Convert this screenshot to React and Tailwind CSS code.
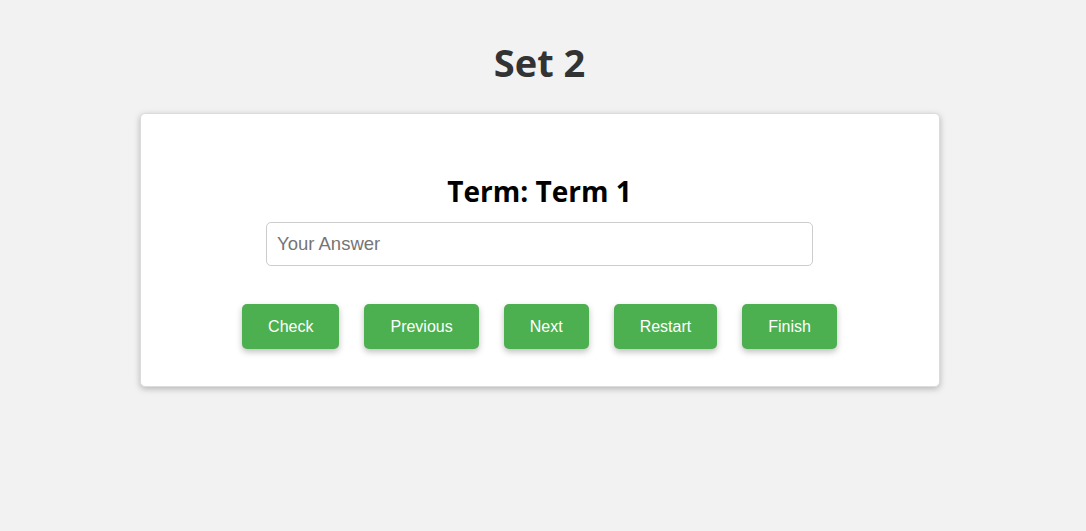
import { useState } from 'react'

const buttons = ['Check', 'Previous', 'Next', 'Restart', 'Finish']

function App() {
  const [answer, setAnswer] = useState('')

  return (
    <div className="min-h-screen bg-[#f2f2f2] flex flex-col items-center pt-[37px] pr-[7px] font-['Liberation_Sans',Arial,sans-serif]">
      {/* Title */}
      <h1 className="h-[50px] leading-[50px] text-[38px] font-bold text-[#333] font-['Open_Sans',sans-serif]">
        Set 2
      </h1>

      {/* Card */}
      <div className="mt-[26px] w-[800px] bg-white border border-[#dcdcdc] rounded-[5px] shadow-[0_2px_6px_rgba(0,0,0,0.25)] flex flex-col items-center pt-[57px] pb-[37px]">
        <h2 className="h-[40px] leading-[40px] text-[28px] font-bold text-black font-['Open_Sans',sans-serif]">
          Term: Term 1
        </h2>

        <input
          type="text"
          value={answer}
          onChange={(e) => setAnswer(e.target.value)}
          placeholder="Your Answer"
          className="mt-[11px] w-[547px] h-[44px] px-[10px] border border-[#ccc] rounded-[5px] text-[18.5px] text-[#333] placeholder-[#757575] focus:outline-none"
        />

        <div className="mt-[38px] flex gap-[25px]">
          {buttons.map((label) => (
            <button
              key={label}
              className="h-[45px] px-[26px] bg-[#4caf50] text-white text-[16px] rounded-[5px] shadow-[0_3px_6px_rgba(0,0,0,0.25)]"
            >
              {label}
            </button>
          ))}
        </div>
      </div>
    </div>
  )
}

export default App
